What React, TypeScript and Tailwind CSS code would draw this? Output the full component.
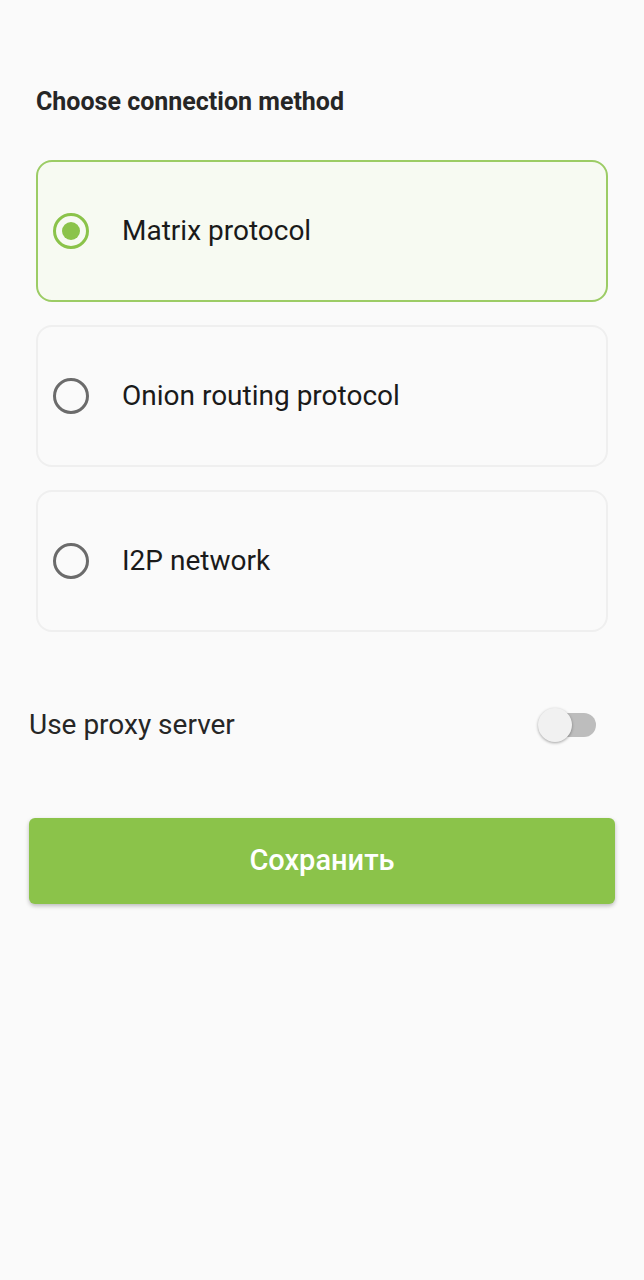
import { useState } from "react";

const options = [
  { id: "matrix", label: "Matrix protocol" },
  { id: "onion", label: "Onion routing protocol" },
  { id: "i2p", label: "I2P network" },
];

export default function App() {
  const [selected, setSelected] = useState("matrix");
  const [proxy, setProxy] = useState(false);

  return (
    <div className="min-h-[1280px] w-full bg-[#fafafa] font-['Roboto',sans-serif] text-[#1f1f1f]">
      <div className="px-[36px] pt-[86px]">
        <h1 className="text-[25px] font-bold leading-[32px] text-[#262626]">
          Choose connection method
        </h1>

        {/* Options */}
        <div className="mt-[42px] flex w-[572px] flex-col gap-[23px]">
          {options.map((o) => {
            const active = o.id === selected;
            return (
              <button
                key={o.id}
                onClick={() => setSelected(o.id)}
                className={`flex h-[142px] items-center rounded-[16px] border-2 pl-[15px] text-left ${
                  active
                    ? "border-[#9ccc65] bg-[#f7faf2]"
                    : "border-[#efefef] bg-[#fafafa]"
                }`}
              >
                <span
                  className={`flex h-[36px] w-[36px] items-center justify-center rounded-full border-[3px] ${
                    active ? "border-[#8bc34a]" : "border-[#6b6b6b]"
                  }`}
                >
                  {active && (
                    <span className="h-[18px] w-[18px] rounded-full bg-[#8bc34a]" />
                  )}
                </span>
                <span className="ml-[33px] text-[28px] leading-[34px] text-[#1a1a1a]">
                  {o.label}
                </span>
              </button>
            );
          })}
        </div>
      </div>

      {/* Proxy toggle */}
      <div className="mt-[76px] flex items-center justify-between pl-[29px] pr-[48px]">
        <span className="text-[28px] leading-[34px] text-[#262626]">
          Use proxy server
        </span>
        <button
          onClick={() => setProxy(!proxy)}
          className="relative h-[34px] w-[58px]"
        >
          <span
            className={`absolute left-[7px] top-[5px] h-[24px] w-[51px] rounded-full ${
              proxy ? "bg-[#c5e1a5]" : "bg-[#bdbdbd]"
            }`}
          />
          <span
            className={`absolute top-0 h-[34px] w-[34px] rounded-full shadow-[0_1px_3px_rgba(0,0,0,0.35)] ${
              proxy ? "left-[24px] bg-[#8bc34a]" : "left-0 bg-[#f1f1f1]"
            }`}
          />
        </button>
      </div>

      <div className="mt-[76px] px-[29px]">
        <button className="flex h-[86px] w-[586px] items-center justify-center rounded-[6px] bg-[#8bc34a] text-[29px] font-medium text-white shadow-[0_2px_4px_rgba(0,0,0,0.25)]">
          Сохранить
        </button>
      </div>
    </div>
  );
}
